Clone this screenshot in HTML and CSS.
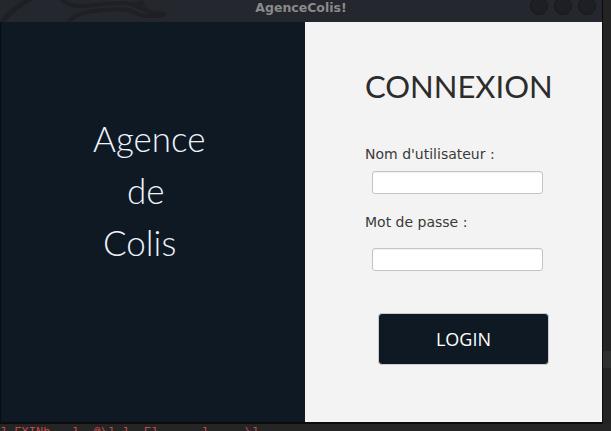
FILE: index.html
```html
<!DOCTYPE html>
<html lang="fr">
<head>
<meta charset="utf-8">
<title>AgenceColis!</title>
<link rel="stylesheet" href="styles.css">
</head>
<body>
<div class="screen">
  <div class="row">
    <div class="window">
      <div class="titlebar">
        <svg class="dragon" width="180" height="22" viewBox="0 0 180 22">
          <path d="M2 22 C10 12 20 4 32 -2" stroke="#1e2026" stroke-width="5" fill="none"/>
          <path d="M60 -2 C66 4 70 6 80 6 C95 6 110 2 125 3 C135 4 140 8 150 12 L165 14 L158 16 L148 16 C140 16 135 12 128 10 C115 8 100 10 88 12 C78 14 72 18 68 22" stroke="#1e2026" stroke-width="4" fill="none"/>
          <path d="M128 4 L142 0 L146 6 Z" fill="#1e2026"/>
        </svg>
        <span class="title">AgenceColis!</span>
        <div class="controls">
          <span class="dot"></span><span class="dot"></span><span class="dot"></span>
        </div>
      </div>
      <div class="content">
        <div class="brand">
          <div class="brand-line l1">Agence</div>
          <div class="brand-line l2">de</div>
          <div class="brand-line l3">Colis</div>
        </div>
        <div class="login">
          <h1 class="heading">CONNEXION</h1>
          <label class="label first" for="user">Nom d'utilisateur :</label>
          <input class="field" id="user" type="text">
          <label class="label second" for="pass">Mot de passe :</label>
          <input class="field" id="pass" type="password">
          <button class="btn" type="button">LOGIN</button>
        </div>
      </div>
    </div>
    <div class="side"><div class="side-block"></div></div>
  </div>
  <div class="terminal">] EXINb&nbsp;&nbsp;&nbsp;l&nbsp;&nbsp;@\l l&nbsp;&nbsp;El&nbsp;&nbsp;&nbsp;&nbsp;&nbsp;&nbsp;l&nbsp;&nbsp;&nbsp;&nbsp;&nbsp;\l</div>
</div>
</body>
</html>
```

FILE: styles.css
```css
html, body {
  margin: 0;
  padding: 0;
}
body {
  background: #252525;
  width: 611px;
  height: 431px;
  overflow: hidden;
}
.screen {
  width: 611px;
  height: 431px;
  overflow: hidden;
}
.row {
  display: flex;
}
.window {
  width: 602px;
  border-right: 1px solid #0a0a0a;
  border-bottom: 2px solid #0c0c0c;
  background: #0f1923;
}
.titlebar {
  position: relative;
  height: 22px;
  background: #25272e;
  display: flex;
  justify-content: center;
  align-items: flex-start;
  overflow: hidden;
}
.dragon {
  position: absolute;
  left: 0;
  top: 0;
}
.title {
  position: relative;
  font-family: "DejaVu Sans", sans-serif;
  font-weight: bold;
  font-size: 12.5px;
  line-height: 16px;
  color: #8a8a8c;
}
.controls {
  position: absolute;
  right: 6px;
  top: -3px;
  display: flex;
  gap: 6px;
}
.dot {
  width: 16px;
  height: 16px;
  border-radius: 50%;
  background: #1d1f24;
  border: 1px solid #17181c;
}
.content {
  display: flex;
  height: 400px;
}
.brand {
  width: 305px;
  border-left: 1px solid #080b0f;
  background: #0f1923;
  padding-top: 90px;
  box-sizing: border-box;
}
.brand-line {
  font-family: "Lato", sans-serif;
  font-weight: 300;
  font-size: 35px;
  line-height: 52px;
  color: #eef3fb;
}
.l1 { padding-left: 92px; }
.l2 { padding-left: 126px; }
.l3 { padding-left: 102px; }
.login {
  flex: 1;
  background: #f3f3f3;
  padding-left: 60px;
  display: flex;
  flex-direction: column;
  align-items: flex-start;
}
.heading {
  margin: 46px 0 0 0;
  font-family: "Lato", sans-serif;
  font-weight: 400;
  font-size: 31px;
  line-height: 36px;
  color: #2c2c2c;
}
.label {
  font-family: "DejaVu Sans", sans-serif;
  font-size: 14px;
  line-height: 16px;
  color: #3a3a3a;
}
.label.first { margin-top: 42px; }
.label.second { margin-top: 20px; }
.field {
  margin: 9px 0 0 7px;
  width: 171px;
  height: 23px;
  box-sizing: border-box;
  border: 1px solid #c4c4c4;
  border-radius: 3px;
  background: #ffffff;
  box-shadow: inset 0 1px 1px rgba(0,0,0,0.06);
  padding: 0;
}
#pass { margin-top: 18px; }
.btn {
  margin: 42px 0 0 13px;
  width: 171px;
  height: 52px;
  border: 1px solid #c9cbcd;
  border-radius: 4px;
  background: #0f1923;
  color: #ffffff;
  font-family: "Open Sans", sans-serif;
  font-size: 18px;
  padding: 0;
}
.side {
  flex: 1;
  background: #232323;
  padding-top: 351px;
}
.side-block {
  height: 17px;
  background: #2e3030;
}
.terminal {
  font-family: "Liberation Mono", monospace;
  font-size: 12px;
  line-height: 14px;
  color: #c84a4a;
  margin-top: 2px;
  white-space: nowrap;
}
```
